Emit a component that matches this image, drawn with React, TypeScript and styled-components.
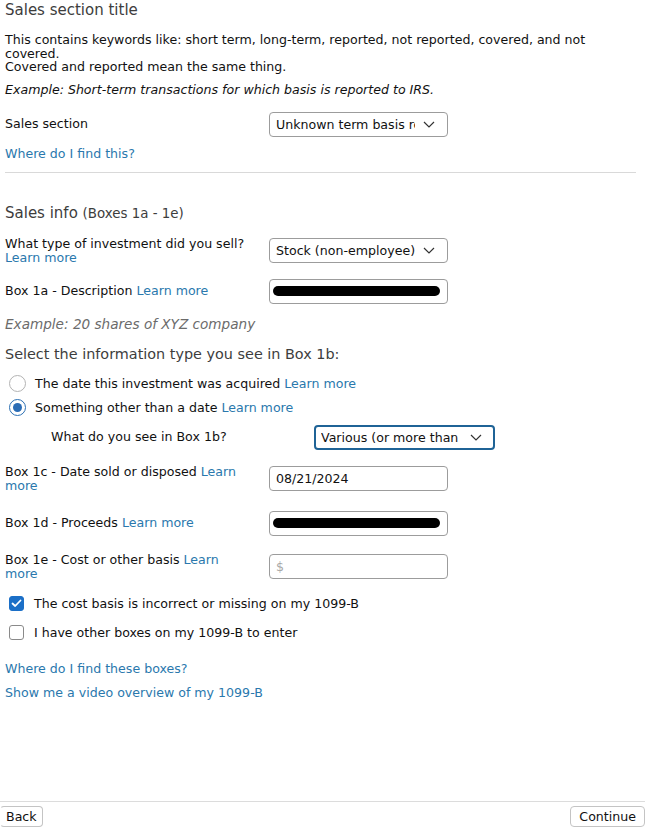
import React from "react";
import styled, { createGlobalStyle } from "styled-components";

const GlobalStyle = createGlobalStyle`
  html, body { margin: 0; padding: 0; background: #fff; }
  body { font-family: "DejaVu Sans", "Liberation Sans", sans-serif; font-size: 12.6px; color: #1a1a1a; }
  * { box-sizing: border-box; }
`;

const Page = styled.div`
  min-height: 840px;
  width: 660px;
  display: flex;
  flex-direction: column;
`;

const Content = styled.div`
  padding: 0 24px 0 5px;
`;

const Title = styled.h2<{ $mt?: number; $size?: number }>`
  margin: ${(p) => p.$mt ?? 0}px 0 0;
  font-size: ${(p) => p.$size ?? 15}px;
  font-weight: normal;
  line-height: 20px;
  color: #3d3d3d;
`;

const Small = styled.span`
  font-size: 13.4px;
`;

const Text = styled.p<{ $mt?: number; $italic?: boolean; $muted?: boolean }>`
  margin: ${(p) => p.$mt ?? 0}px 0 0;
  line-height: 13.7px;
  font-style: ${(p) => (p.$italic ? "italic" : "normal")};
  font-size: ${(p) => (p.$muted ? 13.6 : 12.6)}px;
  color: ${(p) => (p.$muted ? "#6b6b6b" : "#111")};
`;

const Link = styled.a`
  color: #2a78ad;
  text-decoration: none;
  cursor: pointer;
`;

const LinkLine = styled.div<{ $mt?: number }>`
  margin-top: ${(p) => p.$mt ?? 0}px;
  line-height: 14px;
`;

const Rule = styled.hr`
  margin: 11px 0 0;
  border: none;
  border-top: 1px solid #d9d9d9;
`;

const Row = styled.div<{ $mt?: number; $indent?: number }>`
  display: grid;
  grid-template-columns: ${(p) => (p.$indent ? 263 : 264)}px ${(p) => (p.$indent ? 181 : 179)}px;
  align-items: center;
  margin-top: ${(p) => p.$mt ?? 0}px;
  padding-left: ${(p) => p.$indent ?? 0}px;
`;

const Label = styled.div`
  line-height: 14px;
  color: #111;
  padding-right: 18px;
`;

const Field = styled.div<{ $focused?: boolean }>`
  height: 25px;
  display: flex;
  align-items: center;
  border: ${(p) => (p.$focused ? "2px solid #1f6396" : "1px solid #9c9c9c")};
  border-radius: 4px;
  padding: 0 ${(p) => (p.$focused ? 5 : 6)}px;
  background: #fff;
  color: #111;
  overflow: hidden;
`;

const SelectText = styled.span`
  flex: 1;
  white-space: nowrap;
  overflow: hidden;
`;

const Chevron = styled.svg`
  flex: none;
  margin: 0 6px 0 8px;
`;

const Placeholder = styled.span`
  color: #a8a8a8;
`;

const Redaction = styled.div`
  height: 10px;
  flex: 1;
  margin: 0 1px 0 -3px;
  background: #000;
  border-radius: 5px;
`;

const OptionRow = styled.label<{ $mt?: number }>`
  display: flex;
  align-items: center;
  height: 24px;
  margin-top: ${(p) => p.$mt ?? 0}px;
  padding-left: 4px;
  color: #111;
`;

const Radio = styled.span<{ $checked?: boolean }>`
  width: 17px;
  height: 17px;
  border-radius: 50%;
  border: 1px solid ${(p) => (p.$checked ? "#2b6fb3" : "#b3b3b3")};
  margin-right: 9px;
  display: flex;
  align-items: center;
  justify-content: center;
  background: #fff;
  &::after {
    content: "";
    width: 9px;
    height: 9px;
    border-radius: 50%;
    background: ${(p) => (p.$checked ? "#2a6cb5" : "transparent")};
  }
`;

const Checkbox = styled.span<{ $checked?: boolean }>`
  width: 15px;
  height: 15px;
  border-radius: 3px;
  border: 1px solid ${(p) => (p.$checked ? "#1b6fc7" : "#8a8a8a")};
  background: ${(p) => (p.$checked ? "#1b6fc7" : "#fff")};
  margin-right: 10px;
  display: flex;
  align-items: center;
  justify-content: center;
`;

const Footer = styled.div`
  margin-top: auto;
  width: 645px;
  border-top: 1px solid #dcdcdc;
  padding: 4px 0 13px;
  display: flex;
  justify-content: space-between;
`;

const Button = styled.button`
  height: 21px;
  padding: 0 8px;
  font-family: "DejaVu Sans", "Liberation Sans", sans-serif;
  font-size: 12.6px;
  color: #111;
  background: #fff;
  border: 1px solid #c4c4c4;
  border-radius: 4px;
`;

const BackButton = styled(Button)`
  padding: 0 5px;
  border-left-color: transparent;
`;

const ChevronIcon = () => (
  <Chevron width="12" height="7" viewBox="0 0 12 7">
    <path d="M1 1 L6 6 L11 1" fill="none" stroke="#333" strokeWidth="1.2" />
  </Chevron>
);

const Select = ({ value, focused }: { value: string; focused?: boolean }) => (
  <Field $focused={focused}>
    <SelectText>{value}</SelectText>
    <ChevronIcon />
  </Field>
);

export default function App() {
  return (
    <Page>
      <GlobalStyle />
      <Content>
        <Title>Sales section title</Title>
        <Text $mt={13}>
          This contains keywords like: short term, long-term, reported, not reported, covered, and not covered.
          <br />
          Covered and reported mean the same thing.
        </Text>
        <Text $mt={9} $italic>
          Example: Short-term transactions for which basis is reported to IRS.
        </Text>
        <Row $mt={15}>
          <Label>Sales section</Label>
          <Select value="Unknown term basis reported" />
        </Row>
        <LinkLine $mt={10}>
          <Link>Where do I find this?</Link>
        </LinkLine>
        <Rule />

        <Title $mt={30}>
          Sales info <Small>(Boxes 1a - 1e)</Small>
        </Title>
        <Row $mt={13}>
          <Label>
            What type of investment did you sell?
            <br />
            <Link>Learn more</Link>
          </Label>
          <Select value="Stock (non-employee)" />
        </Row>
        <Row $mt={14}>
          <Label>
            Box 1a - Description <Link>Learn more</Link>
          </Label>
          <Field>
            <Redaction />
          </Field>
        </Row>
        <Text $mt={14} $italic $muted>
          Example: 20 shares of XYZ company
        </Text>

        <Title $mt={12} $size={14.4}>
          Select the information type you see in Box 1b:
        </Title>
        <OptionRow $mt={8}>
          <Radio />
          <span>
            The date this investment was acquired <Link>Learn more</Link>
          </span>
        </OptionRow>
        <OptionRow>
          <Radio $checked />
          <span>
            Something other than a date <Link>Learn more</Link>
          </span>
        </OptionRow>
        <Row $mt={5} $indent={46}>
          <Label>What do you see in Box 1b?</Label>
          <Select value="Various (or more than one date)" focused />
        </Row>

        <Row $mt={15}>
          <Label>
            Box 1c - Date sold or disposed <Link>Learn more</Link>
          </Label>
          <Field>08/21/2024</Field>
        </Row>
        <Row $mt={18}>
          <Label>
            Box 1d - Proceeds <Link>Learn more</Link>
          </Label>
          <Field>
            <Redaction />
          </Field>
        </Row>
        <Row $mt={17}>
          <Label>
            Box 1e - Cost or other basis <Link>Learn more</Link>
          </Label>
          <Field>
            <Placeholder>$</Placeholder>
          </Field>
        </Row>

        <OptionRow $mt={11}>
          <Checkbox $checked>
            <svg width="11" height="9" viewBox="0 0 11 9">
              <path d="M1.5 4.5 L4.2 7 L9.5 1.5" fill="none" stroke="#fff" strokeWidth="1.8" strokeLinecap="round" strokeLinejoin="round" />
            </svg>
          </Checkbox>
          <span>The cost basis is incorrect or missing on my 1099-B</span>
        </OptionRow>
        <OptionRow $mt={5}>
          <Checkbox />
          <span>I have other boxes on my 1099-B to enter</span>
        </OptionRow>

        <LinkLine $mt={17}>
          <Link>Where do I find these boxes?</Link>
        </LinkLine>
        <LinkLine $mt={10}>
          <Link>Show me a video overview of my 1099-B</Link>
        </LinkLine>
      </Content>
      <Footer>
        <BackButton>Back</BackButton>
        <Button>Continue</Button>
      </Footer>
    </Page>
  );
}
